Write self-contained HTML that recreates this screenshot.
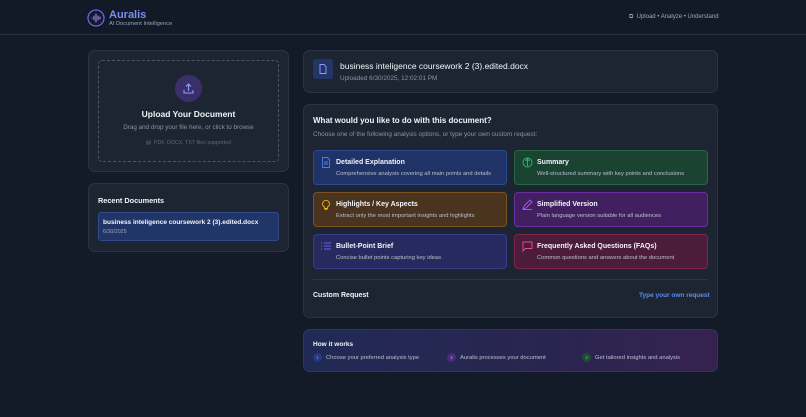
<!DOCTYPE html>
<html><head><meta charset="utf-8"><style>
*{box-sizing:border-box;margin:0;padding:0}
body{width:806px;height:417px;background:#141b28;font-family:"Liberation Sans",sans-serif;color:#e5e7eb;position:relative;overflow:hidden}
.abs{position:absolute}
.card{position:absolute;background:#1d2533;border:1px solid #2b3444;border-radius:7px}
.t{font-weight:bold;color:#f1f5f9}
.tile{position:absolute;width:194px;height:35px;border-radius:4px;border:1px solid}
.tile .h{position:absolute;left:22px;top:8px;font-size:7px;font-weight:bold;color:#f1f5f9}
.tile .d{position:absolute;left:22px;top:20px;font-size:5.8px;color:#b8c0cc}
.tile svg{position:absolute;left:7px;top:6px}
</style></head><body>
<div class="abs" style="left:0;top:0;width:806px;height:35px;background:#121a27;border-bottom:1px solid #263041"></div>
<svg class="abs" style="left:87px;top:9px" width="18" height="18" viewBox="0 0 18 18"><circle cx="9" cy="9" r="8" fill="none" stroke="#6366f1" stroke-width="1.3"/><path d="M5 9v0M7 7v4M9 5v8M11 7v4M13 8v2" stroke="#a78bfa" stroke-width="1.1" stroke-linecap="round"/></svg>
<div class="abs" style="left:109px;top:9px;font-size:11px;font-weight:bold;color:#7c8cf5">Auralis</div>
<div class="abs" style="left:109px;top:21px;font-size:5.7px;color:#9aa4b4">AI Document Intelligence</div>
<div class="abs" style="left:629px;top:14px;font-size:6px;color:#a0a8b5">⧉ &nbsp;Upload • Analyze • Understand</div>

<div class="card" style="left:88px;top:50px;width:201px;height:122px"></div>
<div class="abs" style="left:98px;top:60px;width:181px;height:102px;border:1px dashed #4b5563;border-radius:4px"></div>
<div class="abs" style="left:175px;top:75px;width:27px;height:27px;border-radius:50%;background:#3a2f6b"></div>
<svg class="abs" style="left:182px;top:82px" width="13" height="13" viewBox="0 0 13 13"><path d="M6.5 9V2M4 4.5l2.5-2.5 2.5 2.5M2 8v3h9V8" fill="none" stroke="#8ea0f8" stroke-width="1.1"/></svg>
<div class="abs t" style="left:98px;top:109px;width:181px;text-align:center;font-size:8.5px">Upload Your Document</div>
<div class="abs" style="left:98px;top:124px;width:181px;text-align:center;font-size:6.3px;color:#8b93a1">Drag and drop your file here, or click to browse</div>
<div class="abs" style="left:98px;top:140px;width:181px;text-align:center;font-size:5.3px;color:#5f6876">▤ &nbsp;PDF, DOCX, TXT files supported</div>

<div class="card" style="left:88px;top:183px;width:201px;height:69px"></div>
<div class="abs t" style="left:98px;top:196px;font-size:7.3px">Recent Documents</div>
<div class="abs" style="left:98px;top:212px;width:181px;height:29px;background:#213569;border:1px solid #2f4b8a;border-radius:3px"></div>
<div class="abs t" style="left:103px;top:219px;font-size:6.5px">business inteligence coursework 2 (3).edited.docx</div>
<div class="abs" style="left:103px;top:229px;font-size:5.3px;color:#9aa4b8">6/30/2025</div>

<div class="card" style="left:303px;top:50px;width:415px;height:43px"></div>
<div class="abs" style="left:313px;top:59px;width:20px;height:20px;background:#233566;border-radius:3px"></div>
<svg class="abs" style="left:319px;top:64px" width="8" height="10" viewBox="0 0 8 10"><path d="M1 .5h4l2 2v7H1z" fill="none" stroke="#8ea0f8" stroke-width=".9"/></svg>
<div class="abs t" style="left:340px;top:61px;font-size:8.5px;font-weight:normal;color:#f1f5f9">business inteligence coursework 2 (3).edited.docx</div>
<div class="abs" style="left:340px;top:75px;font-size:6.4px;color:#8b93a1">Uploaded 6/30/2025, 12:02:01 PM</div>

<div class="card" style="left:303px;top:104px;width:415px;height:214px"></div>
<div class="abs t" style="left:313px;top:116px;font-size:8px">What would you like to do with this document?</div>
<div class="abs" style="left:313px;top:131px;font-size:6.4px;color:#8b93a1">Choose one of the following analysis options, or type your own custom request:</div>

<div class="tile" style="left:313px;top:150px;background:#1f3366;border-color:#2b4a94"><svg width="10" height="11" viewBox="0 0 10 11"><path d="M1.5 .5h5l2 2v8h-7z M3 5h4M3 7h4" fill="none" stroke="#4f7df0" stroke-width=".9"/></svg><div class="h">Detailed Explanation</div><div class="d">Comprehensive analysis covering all main points and details</div></div>
<div class="tile" style="left:514px;top:150px;background:#1b4332;border-color:#24693f"><svg width="11" height="11" viewBox="0 0 11 11"><circle cx="5.5" cy="5.5" r="4.5" fill="none" stroke="#22c55e" stroke-width=".9"/><path d="M5.5 2v7M3.5 4l2-2 2 2" fill="none" stroke="#22c55e" stroke-width=".9"/></svg><div class="h">Summary</div><div class="d">Well-structured summary with key points and conclusions</div></div>
<div class="tile" style="left:313px;top:192px;background:#4a3420;border-color:#7a5321"><svg width="10" height="11" viewBox="0 0 10 11"><path d="M3.5 8a3.5 3.5 0 1 1 3 0v1.5h-3zM3.7 10.5h2.6" fill="none" stroke="#eab308" stroke-width=".9"/></svg><div class="h">Highlights / Key Aspects</div><div class="d">Extract only the most important insights and highlights</div></div>
<div class="tile" style="left:514px;top:192px;background:#42205f;border-color:#6b2ea0"><svg width="11" height="11" viewBox="0 0 11 11"><path d="M1 10l1-3 6-6 2 2-6 6zM1 10.5h9" fill="none" stroke="#a855f7" stroke-width=".9"/></svg><div class="h">Simplified Version</div><div class="d">Plain language version suitable for all audiences</div></div>
<div class="tile" style="left:313px;top:234px;background:#272a5e;border-color:#363b8a"><svg width="10" height="10" viewBox="0 0 10 10"><path d="M3 2h7M3 5h7M3 8h7M0 2h1M0 5h1M0 8h1" stroke="#6366f1" stroke-width=".9"/></svg><div class="h">Bullet-Point Brief</div><div class="d">Concise bullet points capturing key ideas</div></div>
<div class="tile" style="left:514px;top:234px;background:#4c1d3a;border-color:#7f2450"><svg width="11" height="11" viewBox="0 0 11 11"><path d="M1 1h9v6.5H3.5L1 10z" fill="none" stroke="#ec4899" stroke-width=".9"/></svg><div class="h">Frequently Asked Questions (FAQs)</div><div class="d">Common questions and answers about the document</div></div>

<div class="abs" style="left:313px;top:279px;width:395px;height:1px;background:#2e3747"></div>
<div class="abs t" style="left:313px;top:292px;font-size:7px">Custom Request</div>
<div class="abs" style="left:639px;top:292px;font-size:6.5px;font-weight:bold;color:#5b8def">Type your own request</div>

<div class="abs" style="left:303px;top:329px;width:415px;height:43px;border-radius:7px;border:1px solid #2f3563;background:linear-gradient(90deg,#202a55,#2a2550 60%,#362250)"></div>
<div class="abs t" style="left:313px;top:341px;font-size:6.5px">How it works</div>
<div class="abs" style="left:313px;top:353px;width:9px;height:9px;border-radius:50%;background:#233a80;font-size:4.5px;text-align:center;line-height:9px;color:#8ea0f8">1</div>
<div class="abs" style="left:326px;top:355px;font-size:5.8px;color:#b8c0cc">Choose your preferred analysis type</div>
<div class="abs" style="left:447px;top:353px;width:9px;height:9px;border-radius:50%;background:#4a2a7a;font-size:4.5px;text-align:center;line-height:9px;color:#c4a0f8">2</div>
<div class="abs" style="left:460px;top:355px;font-size:5.8px;color:#b8c0cc">Auralis processes your document</div>
<div class="abs" style="left:582px;top:353px;width:9px;height:9px;border-radius:50%;background:#1f4a38;font-size:4.5px;text-align:center;line-height:9px;color:#4ade80">3</div>
<div class="abs" style="left:595px;top:355px;font-size:5.8px;color:#b8c0cc">Get tailored insights and analysis</div>
</body></html>
